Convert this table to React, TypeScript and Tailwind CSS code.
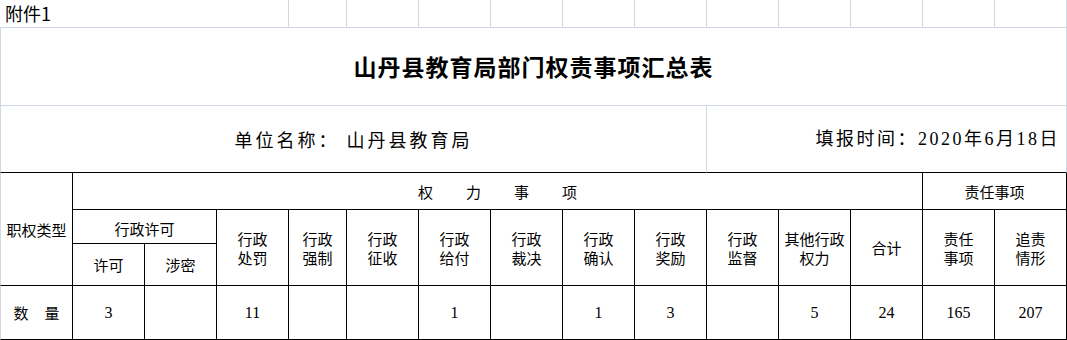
const heads = [
  ['行政', '处罚'],
  ['行政', '强制'],
  ['行政', '征收'],
  ['行政', '给付'],
  ['行政', '裁决'],
  ['行政', '确认'],
  ['行政', '奖励'],
  ['行政', '监督'],
  ['其他行政', '权力'],
  ['合计'],
  ['责任', '事项'],
  ['追责', '情形'],
]

const counts = ['3', '', '11', '', '', '1', '', '1', '3', '', '5', '24', '165', '207']

// black-bordered table cell
function TCell({ className = '', children }: { className?: string; children?: React.ReactNode }) {
  return (
    <div className={`flex items-center justify-center border-r border-b border-black text-center text-[15px] leading-[19px] ${className}`}>
      {children}
    </div>
  )
}

export default function App() {
  return (
    <div className="h-[340px] w-[1067px] overflow-hidden bg-white font-['Noto_Sans_CJK_SC',sans-serif] text-black">
      <div className="grid grid-cols-[73px_repeat(3,72px)_58px_repeat(10,72px)] grid-rows-[28px_78px_67px_37px_34px_42px_54px]">
        {/* row 1 */}
        <div className="col-span-4 flex items-center border-r border-b border-[#d0d7e5] pl-[5px] text-[18px]">附件1</div>
        {Array.from({ length: 11 }).map((_, i) => (
          <div key={i} className="border-r border-b border-[#d0d7e5]" />
        ))}

        {/* row 2 */}
        <div className="col-span-15 flex items-center justify-center border-x border-b border-[#d0d7e5] text-[23px] font-bold tracking-[1px]">
          山丹县教育局部门权责事项汇总表
        </div>

        {/* row 3 */}
        <div className="col-span-10 flex items-center justify-center border-x border-b border-[#d0d7e5] border-b-black text-[18px] tracking-[3px]">
          单位名称： 山丹县教育局
        </div>
        <div className="col-span-5 flex items-center justify-end border-r border-b border-[#d0d7e5] border-b-black pr-[6px] font-['Liberation_Serif','Noto_Sans_CJK_SC',serif] text-[18px] tracking-[2.5px]">
          填报时间：2020年6月18日
        </div>

        {/* header */}
        <TCell className="row-span-3 border-l border-l-[#d0d7e5]">职权类型</TCell>
        <TCell className="col-span-12 gap-[33px]">
          <span>权</span>
          <span>力</span>
          <span>事</span>
          <span>项</span>
        </TCell>
        <TCell className="col-span-2">责任事项</TCell>

        <TCell className="col-span-2 pt-[3px]">行政许可</TCell>
        {heads.map((h, i) => (
          <TCell key={i} className="row-span-2 flex-col">
            {h.map((t) => (
              <span key={t}>{t}</span>
            ))}
          </TCell>
        ))}

        <TCell>许可</TCell>
        <TCell>涉密</TCell>

        {/* data row */}
        <TCell className="gap-4 border-l border-l-[#d0d7e5]">
          <span>数</span>
          <span>量</span>
        </TCell>
        {counts.map((c, i) => (
          <TCell key={i} className="font-['Liberation_Serif',serif] text-[16px]">
            {c}
          </TCell>
        ))}
      </div>
    </div>
  )
}
